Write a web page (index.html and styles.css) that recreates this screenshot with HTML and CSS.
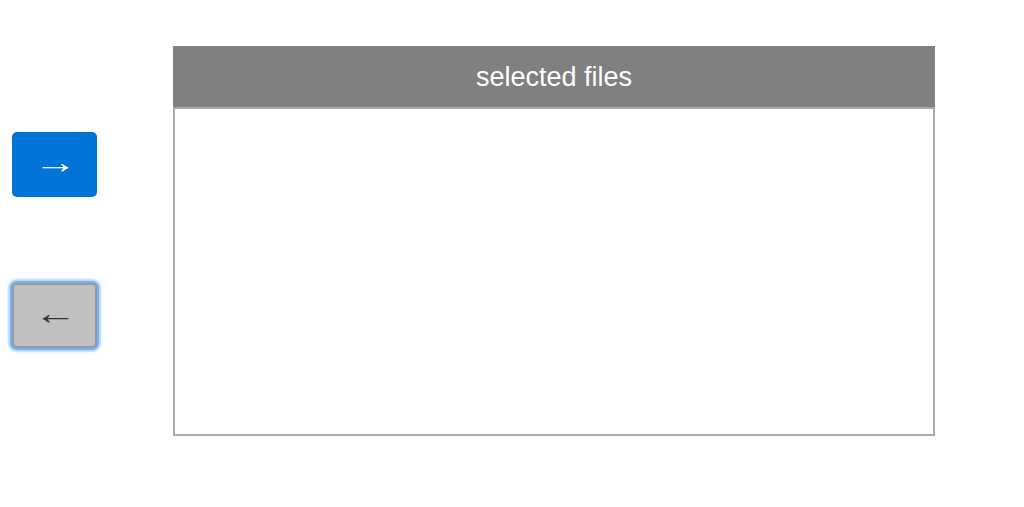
FILE: index.html
```html
<!DOCTYPE html>
<html>
<head>
<meta charset="utf-8">
<link rel="stylesheet" href="styles.css">
</head>
<body>
<div class="page">
  <div class="controls">
    <button class="btn btn-primary"><span class="arrow">→</span></button>
    <button class="btn btn-secondary"><span class="arrow">←</span></button>
  </div>
  <div class="panel">
    <div class="panel-header">selected files</div>
    <div class="panel-body"></div>
  </div>
</div>
</body>
</html>
```
FILE: styles.css
```css
html, body {
  margin: 0;
  padding: 0;
  background: #ffffff;
  font-family: "Liberation Sans", Arial, sans-serif;
}
.page {
  display: flex;
  align-items: flex-start;
  padding-left: 12px;
}
.controls {
  display: flex;
  flex-direction: column;
  gap: 86px;
  margin-top: 132px;
}
.btn {
  width: 85px;
  height: 65px;
  border-radius: 5px;
  font-family: "Liberation Sans", Arial, sans-serif;
  font-size: 32px;
  line-height: 1;
  padding: 0 0 6px;
  display: flex;
  align-items: center;
  justify-content: center;
}
.arrow {
  display: inline-block;
  transform: scaleX(1.35);
}
.btn-primary {
  background: #0074d9;
  color: #ffffff;
  border: none;
}
.btn-secondary {
  background: #c0c0c0;
  color: #333333;
  border: 2px solid #9a9a9a;
  box-shadow: 0 0 0 2px #72b2f6, 0 0 2px 4px #b3d6fb;
}
.panel {
  margin-top: 46px;
  margin-left: 76px;
  width: 762px;
  height: 390px;
  box-sizing: border-box;
  border: 2px solid #a9a9a9;
  border-top: none;
  display: flex;
  flex-direction: column;
}
.panel-header {
  background: #808080;
  border-bottom: 2px solid #a9a9a9;
  margin: 0 -2px;
  color: #ffffff;
  font-size: 27px;
  padding-top: 2px;
  box-sizing: border-box;
  height: 63px;
  display: flex;
  align-items: center;
  justify-content: center;
}
.panel-body {
  flex: 1;
}
```
